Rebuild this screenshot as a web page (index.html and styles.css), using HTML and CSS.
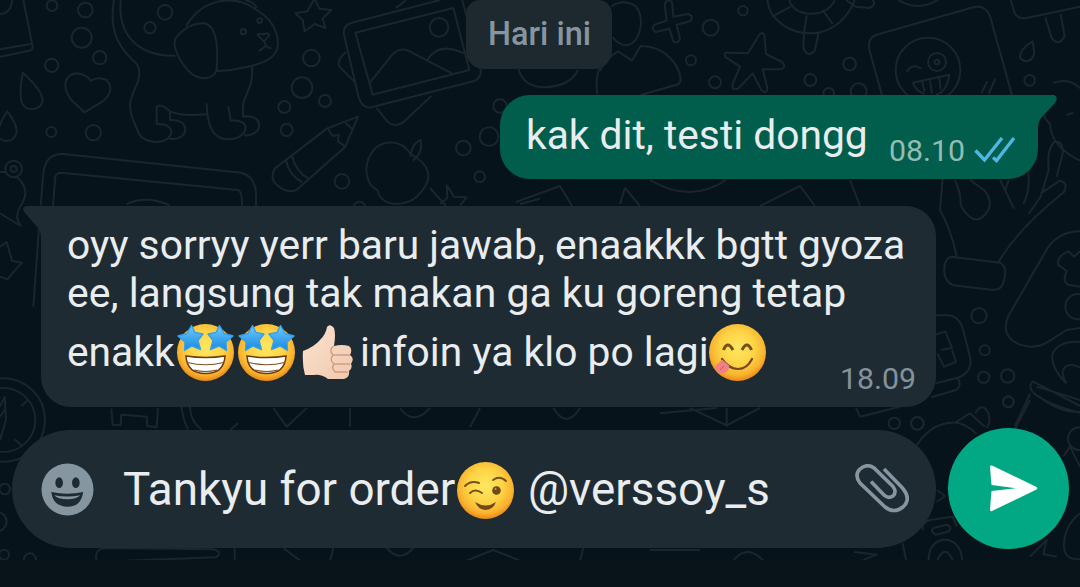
FILE: index.html
```html
<!DOCTYPE html>
<html lang="id">
<head>
<meta charset="utf-8">
<title>Chat</title>
<link rel="stylesheet" href="styles.css">
</head>
<body>
<svg class="wallpaper" width="1080" height="560" viewBox="0 0 1080 560" aria-hidden="true">
  <!-- dog, heart, drops, laptop -->
  <g transform="scale(.33333)">
    <path d="M70 0L98 140Q98 150 88 152L0 170M0 148L92 132M0 42Q34 40 36 0"/>
    <circle cx="156" cy="17" r="16"/><circle cx="256" cy="30" r="22"/><circle cx="245" cy="113" r="30"/><circle cx="299" cy="173" r="20"/><circle cx="155" cy="196" r="20"/><circle cx="154" cy="396" r="15"/><circle cx="280" cy="398" r="23"/><circle cx="495" cy="37" r="22"/><circle cx="450" cy="83" r="17"/>
    <path d="M68 218Q128 272 128 302C124 334 72 338 64 304Q58 270 68 218ZM22 334Q52 374 50 396C44 430 0 432 -8 400Q0 364 22 334Z"/>
    <path d="M253 337L214 300C180 254 198 222 232 220Q260 224 272 242Q294 228 320 240C344 266 326 296 292 314Z"/>
    <path d="M342 0C324 100 364 150 408 190Q424 208 414 244C396 290 382 304 396 352L418 404Q432 424 468 426C528 424 530 368 470 372V320Q482 308 510 334Q546 350 620 342M362 0C352 110 420 170 526 167M510 334V360C576 356 566 426 508 416M620 310C622 400 650 418 690 418C752 410 752 354 692 362L685 318M732 406C792 410 794 340 730 350C720 280 762 280 756 200"/>
    <path d="M558 78C616 -16 720 -14 772 32C836 68 846 138 820 166C796 196 700 212 648 214M608 70Q566 70 530 110C510 136 544 196 578 224C604 240 638 240 650 210Q660 70 608 70M735 0Q764 6 770 24M772 104Q778 98 790 104Q804 94 808 106L792 124ZM792 124L798 138L776 154M798 138L814 146"/>
    <circle cx="730" cy="95" r="8"/><circle cx="779" cy="62" r="7"/>
    <path d="M944 -4L958 26L994 30L968 56L976 84L944 72L914 94L908 60L886 40L922 34Z"/>
    <circle cx="934" cy="174" r="25"/><circle cx="906" cy="263" r="31"/><circle cx="975" cy="303" r="18"/><circle cx="853" cy="321" r="18"/><circle cx="860" cy="390" r="18"/><circle cx="1026" cy="544" r="22"/>
    <path d="M1074 350L980 386L824 506Q806 540 840 562Q870 582 892 568L1036 440ZM984 386L998 408L1016 404L1014 424L1034 438M1036 368L1056 386M876 468Q888 516 926 536M858 482Q868 526 906 546"/>
    <path d="M122 616L130 520Q136 460 190 462L724 518Q766 530 768 580V640M158 630L166 530Q168 518 184 518L714 570Q728 574 726 630M380 612Q440 584 510 616"/>
    <circle cx="41" cy="507" r="25"/><circle cx="41" cy="507" r="9"/><path d="M0 516H18M50 530Q96 570 60 620Q42 650 62 678L0 640M120 640L100 920M0 740L20 726L36 782L66 788L44 812L22 838L0 830"/>
  </g>
  <!-- picture frame, apple, small star -->
  <g transform="translate(240 0) scale(.33333)">
    <path d="M336 68L600 0M336 68Q308 76 312 104L356 292Q366 326 394 322L700 244Q730 230 720 204L664 -10M346 98L640 24L688 210L398 284ZM390 248L450 172Q480 132 520 160L636 220M562 180Q594 124 672 160M318 156Q290 178 298 200L346 248M410 324L440 362Q462 384 488 368L574 288M468 24L498 0"/>
    <circle cx="597" cy="82" r="28"/><circle cx="780" cy="318" r="20"/><circle cx="747" cy="410" r="28"/><circle cx="670" cy="444" r="22"/><circle cx="719" cy="530" r="16"/><circle cx="358" cy="622" r="17"/>
    <path d="M512 462C480 414 430 424 404 446C360 500 382 556 412 570C426 630 510 616 534 586C590 530 562 490 512 462ZM512 470Q514 430 542 420Q550 460 518 482M600 612L622 594L620 556L642 590L680 592L660 616M840 612L900 596"/>
    <path d="M836 208Q850 260 910 262Q990 260 1014 210M1072 284Q1060 200 1110 170"/>
  </g>
  <!-- doodles along the top right -->
  <g transform="translate(600 0) scale(.33333)">
    <path d="M34 20Q72 -6 108 20C138 60 118 132 80 136Q58 136 38 112M0 212Q20 174 54 154L96 182L122 138C200 138 240 200 242 240Q240 254 224 256L120 286"/>
    <path d="M194 12Q202 -6 216 6L220 50L264 42Q284 48 270 64L230 74L240 116Q234 134 220 124L208 86L168 96Q150 88 164 74L200 62Z"/>
    <circle cx="332" cy="83" r="24"/><circle cx="429" cy="32" r="14"/><circle cx="273" cy="181" r="15"/><circle cx="345" cy="247" r="18"/><circle cx="631" cy="240" r="18"/><circle cx="749" cy="192" r="19"/><circle cx="776" cy="274" r="24"/><circle cx="686" cy="280" r="16"/>
    <path d="M478 104Q492 90 494 114L498 162L546 186Q562 204 540 208L488 208L502 264Q500 286 484 270L458 220L416 264Q394 276 398 252L420 200L378 172Q366 156 388 158L444 160Z"/>
    <path d="M502 0C508 62 572 102 634 100C700 98 746 50 764 0M568 0C580 52 680 58 704 0M516 50L572 20M668 30L698 72M612 100L620 46M612 100L610 144Q624 176 644 152L656 100M738 0L766 20L808 24Q830 14 818 0M894 0Q954 36 1014 0"/>
    <path d="M846 286L808 150Q802 112 830 104L1120 22Q1154 12 1170 48L1236 286"/>
    <circle cx="984" cy="210" r="97"/><circle cx="1011" cy="186" r="27"/><circle cx="1011" cy="186" r="7"/>
    <path d="M920 216Q936 188 964 206M938 248L1048 224Q1040 278 1008 284M938 248Q950 276 974 282M966 244L974 276M990 242L996 280M1018 234L1022 270M1162 244L1144 280M1186 236L1166 282M1232 0L1244 40Q1254 58 1280 54L1440 20M1336 52L1354 112Q1376 144 1394 108L1382 42M1298 124Q1258 148 1260 174C1276 194 1306 180 1302 150Z"/><circle cx="1289" cy="241" r="16"/>
  </g>
  <!-- hands, controller, mug -->
  <g transform="translate(900 170) scale(.33333)">
    <path d="M130 0L120 120Q154 180 170 260M164 30Q184 70 182 106Q222 176 258 130Q284 98 252 60L210 30M300 30L320 70L342 116M326 30L316 60M384 0Q392 60 370 102M446 0L422 80L386 132M422 70L480 32Q506 38 492 66Q350 180 296 276M154 260L300 278Q324 292 312 330Q308 360 280 360L160 346Q126 330 134 284Q138 264 154 260M540 184Q480 184 444 232L324 440Q300 500 360 524Q406 540 446 514L500 480L540 474M540 244L522 260L506 244Q472 256 474 284L500 304Q486 332 504 344L540 350"/>
    <circle cx="534" cy="410" r="38"/><circle cx="237" cy="437" r="23"/><circle cx="254" cy="541" r="15"/><circle cx="251" cy="622" r="17"/><circle cx="323" cy="618" r="20"/><circle cx="325" cy="696" r="16"/><circle cx="52" cy="760" r="19"/>
    <path d="M105 436H145Q182 440 192 490L212 570Q212 612 170 624L108 640M108 494L136 484L156 534L122 540M156 540L168 576L132 590L112 550M94 682L168 660Q188 646 172 624M498 640Q450 590 458 550Q480 510 540 516M500 640C476 606 490 570 540 592M540 708Q430 650 398 634Q380 654 410 676Q460 710 540 728M410 650L540 690M390 672L344 770"/>
    <path d="M540 -245Q510 -278 460 -262M416 -220Q430 -150 450 -140Q452 -70 540 -28M500 -165L520 -172M446 0Q440 -60 462 -84Q490 -90 488 -50L470 20"/>
  </g>
  <!-- clock and lower left -->
  <g transform="translate(0 380) scale(.33333)">
    <circle cx="10" cy="120" r="125"/><circle cx="10" cy="120" r="96"/><path d="M64 78L84 60M44 178L64 196M0 80L14 50L18 120L0 180M14 90L0 110M334 86L338 134L362 136L364 104L440 110L442 138L470 142L474 84M544 80Q548 116 564 148M570 80Q570 124 606 150M690 150L714 130"/>
    <circle cx="14" cy="327" r="16"/><circle cx="-8" cy="425" r="28"/><circle cx="12" cy="524" r="15"/><circle cx="90" cy="538" r="18"/>
    <path d="M290 542Q280 506 320 504L640 508Q670 516 648 532L380 542M704 504V542"/>
    <path d="M850 504L900 542M1000 504L990 542M1160 504Q1200 550 1240 504M1400 542L1480 510L1560 542M1750 504L1740 542M1950 510H2100M2200 542Q2240 490 2290 542M820 84L860 140L920 84M1050 84V140M1200 84Q1240 140 1290 84M1440 84L1410 142M1660 84Q1700 150 1740 84M1980 100L2150 84M2070 84L2180 136L2280 84M2180 84V140"/>
  </g>
  <!-- lower right -->
  <g transform="translate(830 400) scale(.33333)">
    <path d="M78 24L90 50L210 20M256 142Q300 70 366 68Q400 64 440 102M378 66L420 40L464 80M436 40Q452 10 470 30Q488 60 470 84M600 0L552 92M640 0Q700 40 750 36"/>
    <circle cx="193" cy="70" r="17"/><circle cx="262" cy="70" r="19"/><circle cx="535" cy="5" r="16"/><circle cx="748" cy="116" r="34"/>
    <path d="M700 170L720 140L750 200M320 270L345 288L320 306M280 390Q270 370 300 360L368 350L380 380M310 384L350 374Q372 384 352 396L318 404Q300 396 310 384M218 430L228 480M296 480C294 400 394 398 396 480M322 480Q346 430 368 480M72 456L140 464L100 480M600 470L650 420L640 462L680 470M750 340Q700 380 702 440Q704 480 750 478"/>
  </g>
  <!-- strip between the two bubbles -->
  <g class="fine">
    <path d="M430 188L446 206M516 202L560 186L572 206M620 204L625 188L640 206M650 180Q690 204 726 180M760 206L800 186L815 206M850 180L860 206"/>
  </g>
</svg>

<svg class="defs" width="0" height="0" aria-hidden="true">
  <defs>
    <radialGradient id="face" cx=".5" cy=".42" r=".6">
      <stop offset="0" stop-color="#ffe761"/><stop offset=".5" stop-color="#fdd445"/><stop offset=".8" stop-color="#fab22f"/><stop offset="1" stop-color="#e57f10"/>
    </radialGradient>
    <linearGradient id="blue" x1="0" y1="0" x2="0" y2="1">
      <stop offset="0" stop-color="#6ccbff"/><stop offset="1" stop-color="#1787e0"/>
    </linearGradient>
    <linearGradient id="skin" x1="0" y1="0" x2="1" y2="1">
      <stop offset="0" stop-color="#fde3cf"/><stop offset="1" stop-color="#efc8ae"/>
    </linearGradient>
    <symbol id="starry" viewBox="0 0 57 57" overflow="visible">
      <circle cx="28.500" cy="28.500" r="28.500" fill="url(#face)"/>
      <path d="M9 32Q28.500 35 48 32Q47 49.500 28.500 49.500Q10 49.500 9 32Z" fill="#fff" stroke="#6b3a0b" stroke-width="1.500"/>
      <path d="M10.500 38.500Q28.500 43 46.500 38.500M17 46Q28.500 49 40 46" fill="none" stroke="#805020" stroke-width="1.200"/>
      <path id="eye-star" d="M14.500 1.500L18 8.500L26 10L21 16.500L23.500 25.500L15 22L7.500 26.500L8 18L1 12L10 9.500Z" fill="url(#blue)" stroke="#3a9fe6" stroke-width="1.400" stroke-linejoin="round"/>
      <use href="#eye-star" transform="translate(57 0) scale(-1 1)"/>
    </symbol>
  </defs>
</svg>

<main class="chat">
  <div class="date">Hari ini</div>

  <section class="bubble bubble-out">
    <svg class="tail tail-out" width="22" height="32" viewBox="0 0 22 32"><path d="M0 0H17Q22 2 18 8L4 23Q1 27 1 32H0Z" fill="#015e4d"/></svg>
    <span class="text out-text">kak dit, testi dongg</span>
    <span class="time out-time">08.10</span>
    <svg class="ticks" width="42" height="27" viewBox="0 0 42 27"><path d="M1.500 14.500L10.500 24L28 2M19 21.500L22.500 24.500L40 2" fill="none" stroke="#50b6e4" stroke-width="3.300"/></svg>
  </section>

  <section class="bubble bubble-in">
    <svg class="tail tail-in" width="20" height="32" viewBox="0 0 20 32"><path d="M20 0H4Q-1 2 3 7L16 22Q19 26 19 32H20Z" fill="#1f2b33"/></svg>
    <div class="line"><span class="text l1">oyy sorryy yerr baru jawab, enaakkk bgtt gyoza</span></div>
    <div class="line"><span class="text l2">ee, langsung tak makan ga ku goreng tetap</span></div>
    <div class="line line-emoji">
      <span class="text l3a">enakk</span>
      <svg class="emoji" width="57" height="57"><use href="#starry"/></svg>
      <svg class="emoji gap" width="57" height="57"><use href="#starry"/></svg>
      <svg class="thumb" width="52" height="57" viewBox="0 0 52 57">
        <path d="M1 27Q12 23 18 16Q24 10 25 3Q28-1 32 4Q34 10 32 22Q40 20 47 22Q51 25 48 31Q53 34 49 40Q51 44 47 47Q48 53 42 55H26Q19 50 12 51L3 51Q0 40 1 27Z" fill="url(#skin)"/>
        <path d="M32 22Q26 26 31 31H48M31 31Q27 36 32 40H48M32 40Q29 44 33 48H46" fill="none" stroke="#cf9c83" stroke-width="1.400"/>
      </svg>
      <span class="text l3b">infoin ya klo po lagi</span>
      <svg class="emoji" width="57" height="57" viewBox="0 0 57 57">
        <circle cx="28.500" cy="28.500" r="28.500" fill="url(#face)"/>
        <path d="M14.500 26Q18.500 16 24 26M33 26Q38 16 42.500 26" fill="none" stroke="#765018" stroke-width="3"/>
        <path d="M13 35Q20 45 29 45Q38 45 43 35" fill="none" stroke="#754719" stroke-width="2.200" stroke-linecap="round"/>
        <path d="M13 36L20 42Q19 49 13 49Q6 48 7 42Z" fill="#f17f86" stroke="#f17f86" stroke-linejoin="round"/><path d="M15 42L11 46" stroke="#d65468" stroke-width="1"/>
      </svg>
    </div>
    <span class="time in-time">18.09</span>
  </section>

  <footer class="composer">
    <div class="input">
      <svg class="smiley" width="53" height="53" viewBox="0 0 54 54">
        <circle cx="27" cy="27" r="26.500" fill="#8696a0"/>
        <ellipse cx="18.500" cy="20" rx="3.900" ry="5.400" fill="#1f2b33"/><ellipse cx="35.500" cy="20" rx="3.900" ry="5.400" fill="#1f2b33"/>
        <path d="M10.500 29.500Q27 33 43 29.500Q41 44.500 27 44.500Q12 44 10.500 29.500Z" fill="#1f2b33"/>
        <path d="M13.500 32.800Q27 35.500 40 32.800Q36 37 27 37Q17 37 13.500 32.800Z" fill="#8696a0"/>
      </svg>
      <span class="text c1">Tankyu for order</span>
      <svg class="emoji wink" width="57" height="57" viewBox="0 0 57 57">
        <circle cx="28.500" cy="28.500" r="28.500" fill="url(#face)"/>
        <path d="M8 24Q14 18 22 21M36 18Q43 13 49 19M13 31Q18 26 25 31" fill="none" stroke="#765018" stroke-width="2" stroke-linecap="round"/>
        <circle cx="39.500" cy="28.500" r="4.300" fill="#6d4a1c"/><circle cx="38.500" cy="27" r="1" fill="#c49b58"/>
        <path d="M18 40Q29 47 39 40Q36 48 28 48Q21 47 18 40Z" fill="#754719"/>
      </svg>
      <span class="text c2">@verssoy_s</span>
      <svg class="clip" width="54" height="50" viewBox="0 0 54 50"><path d="M29 5L47 23.500Q57 35 48 43Q39 50 30 43L5 19Q-1 11 5 5Q12-1 19 4L38 22.500Q42 28 38 32Q33 35 29 31L16 17.500" fill="none" stroke="#8696a0" stroke-width="3.600"/></svg>
    </div>
    <div class="send"><svg width="48" height="47" viewBox="0 0 48 47"><path d="M2 .5Q0 0 0 2L1.500 20L26 23.200L1.500 26L0 44Q0 47 2 46L46.500 24.500Q48 23.200 46.500 22Z" fill="#fff"/></svg></div>
  </footer>
</main>
<div class="navbar"></div>
</body>
</html>
```
FILE: styles.css
```css
* { box-sizing: border-box; }
body {
  margin: 0;
  width: 1080px;
  height: 587px;
  overflow: hidden;
  position: relative;
  background: #07131a;
  font-family: Roboto, "Liberation Sans", sans-serif;
  color: #e9edef;
}
svg { display: block; flex: none; }
.wallpaper {
  position: absolute;
  inset: 0;
  fill: none;
  stroke: #1a262c;
  stroke-width: 6;
  stroke-linejoin: round;
}
.fine { stroke-width: 2; }
.defs { position: absolute; }
.chat {
  position: relative;
  height: 560px;
  display: flex;
  flex-direction: column;
}
.date {
  align-self: center;
  margin-right: 2px;
  padding-left: 1px;
  width: 146px;
  height: 69px;
  border-radius: 14px 14px 18px 18px;
  background: #1d282f;
  color: #8696a0;
  font-size: 32.5px;
  font-weight: 500;
  line-height: 68px;
  text-align: center;
}
.text {
  font-size: 40.75px;
  line-height: 48px;
  white-space: nowrap;
  flex: none;
}
.time { font-size: 30.3px; line-height: 36px; white-space: nowrap; }
.bubble { position: relative; border-radius: 30px; }
.bubble-out {
  align-self: flex-end;
  display: flex;
  width: 538px;
  height: 84px;
  margin: 26px 42px 0 0;
  padding: 15px 0 0 26px;
  border-top-right-radius: 0;
  background: #015e4d;
}
.out-text { width: 363px; line-height: 50px; }
.out-time { width: 85px; margin-top: 23px; color: #93bdb3; }
.ticks { margin-top: 26px; }
.tail { position: absolute; top: 0; }
.tail-out { left: 537px; }
.tail-in { left: -19px; }
.bubble-in {
  width: 895px;
  height: 201px;
  margin: 27px 0 0 41px;
  padding: 15px 0 0 26px;
  border-top-left-radius: 0;
  background: #1f2b33;
}
.line { display: flex; height: 47.5px; }
.l2 { font-size: 40.95px; }
.line-emoji { height: 57px; margin-top: 8px; align-items: center; }
.line-emoji .text { padding-bottom: 2px; }
.l3a { width: 110px; }
.gap { margin-left: 4px; }
.thumb { margin-left: 7px; }
.l3b { width: 349px; margin-left: 6px; }
.emoji { overflow: visible; }
.in-time { position: absolute; right: 20px; bottom: 10px; color: #84929b; }
.composer {
  display: flex;
  align-items: center;
  gap: 12px;
  margin: 21px 0 0 12px;
}
.input {
  display: flex;
  align-items: center;
  width: 924px;
  height: 118px;
  padding: 1px 0 0 29px;
  border-radius: 59px;
  background: #1f2b33;
}
.input .text { font-size: 45.8px; line-height: 54px; padding-top: 2px; }
.c1 { width: 334px; margin-left: 29px; }
.wink { margin-top: 3px; }
.c2 { width: 327px; margin-left: 14px; }
.send {
  display: flex;
  align-items: center;
  width: 121px;
  height: 121px;
  padding-left: 42px;
  border-radius: 50%;
  background: #02a884;
}
.navbar { position: relative; height: 27px; background: #09131a; }
```
